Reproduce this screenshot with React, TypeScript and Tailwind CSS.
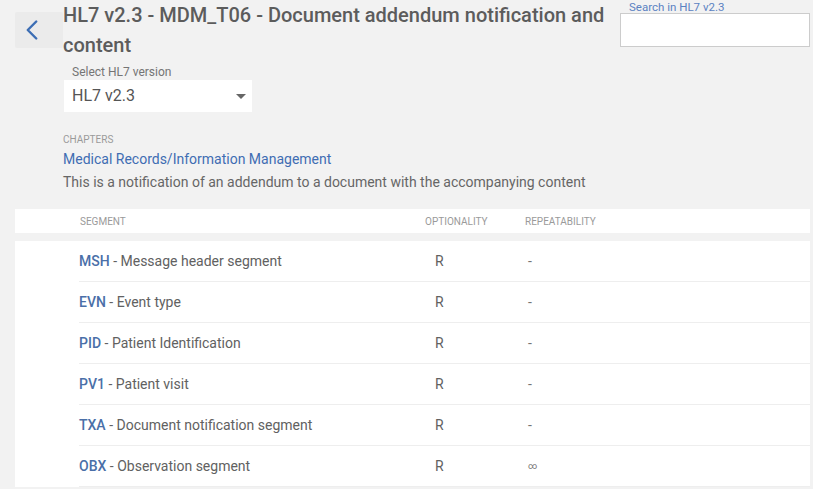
import { ChevronLeft } from 'lucide-react';

interface Segment {
  code: string;
  name: string;
  optionality: string;
  repeatability: string;
}

const segments: Segment[] = [
  { code: 'MSH', name: 'Message header segment', optionality: 'R', repeatability: '-' },
  { code: 'EVN', name: 'Event type', optionality: 'R', repeatability: '-' },
  { code: 'PID', name: 'Patient Identification', optionality: 'R', repeatability: '-' },
  { code: 'PV1', name: 'Patient visit', optionality: 'R', repeatability: '-' },
  { code: 'TXA', name: 'Document notification segment', optionality: 'R', repeatability: '-' },
  { code: 'OBX', name: 'Observation segment', optionality: 'R', repeatability: '∞' },
];

export default function App() {
  return (
    <div className="min-h-screen bg-[#f2f2f2] pl-[15px] pr-[3px] font-['Roboto',sans-serif] text-[#616161]">
      {/* header */}
      <div className="flex items-start">
        <button className="mt-[12px] flex h-[36px] w-[48px] shrink-0 items-center justify-start rounded-[2px] bg-[#ebebeb] text-[#3d6eb4]">
          <ChevronLeft size={34} strokeWidth={1.7} />
        </button>

        <div className="min-w-0 flex-1 pr-[12px]">
          <h1 className="text-[20px] font-medium leading-[30px] text-[#5c5c5c]">
            HL7 v2.3 - MDM_T06 - Document addendum notification and content
          </h1>
          <div className="mt-[5px] pl-[1px]">
            <div className="pl-[8px] text-[12px] leading-[14px] text-[#757575]">Select HL7 version</div>
            <div className="mt-[1px] flex h-[32px] w-[188px] items-center justify-between bg-white pl-[8px] pr-[6px]">
              <span className="text-[16px] text-[#555]">HL7 v2.3</span>
              <span className="h-0 w-0 border-x-[5px] border-t-[5px] border-x-transparent border-t-[#666]" />
            </div>
          </div>
        </div>

        <div className="w-[190px] shrink-0">
          <div className="pl-[9px] pt-[1px] text-[11.5px] leading-[12px] text-[#5b82c2]">Search in HL7 v2.3</div>
          <input className="h-[34px] w-full border border-[#cccccc] bg-white outline-none" />
        </div>
      </div>

      {/* chapter info */}
      <div className="mt-[22px] pl-[48px]">
        <div className="text-[10px] leading-[12px] text-[#9a9a9a]">CHAPTERS</div>
        <div className="mt-[3px] text-[14px] leading-[20px] text-[#3f6db3]">Medical Records/Information Management</div>
        <div className="mt-[3px] text-[14px] leading-[20px] text-[#666]">
          This is a notification of an addendum to a document with the accompanying content
        </div>
      </div>

      {/* table header */}
      <div className="mt-[17px] grid h-[24px] grid-cols-[345px_100px_1fr] items-center bg-white pl-[65px] text-[10px] text-[#9a9a9a]">
        <span>SEGMENT</span>
        <span>OPTIONALITY</span>
        <span>REPEATABILITY</span>
      </div>

      {/* rows */}
      <div className="mt-[8px] bg-white pl-[64px]">
        {segments.map((s) => (
          <div
            key={s.code}
            className="grid h-[41px] grid-cols-[346px_100px_1fr] items-center border-b border-[#eeeeee] text-[14px]"
          >
            <span>
              <span className="font-medium text-[#4a6fa8]">{s.code}</span>
              <span className="text-[#616161]"> - {s.name}</span>
            </span>
            <span className="pl-[10px] text-[#616161]">{s.optionality}</span>
            <span className={s.repeatability === '∞' ? 'pl-[3px] pt-[2px] text-[9px] text-[#757575]' : 'pl-[3px] text-[#757575]'}>
              {s.repeatability}
            </span>
          </div>
        ))}
      </div>
    </div>
  );
}
